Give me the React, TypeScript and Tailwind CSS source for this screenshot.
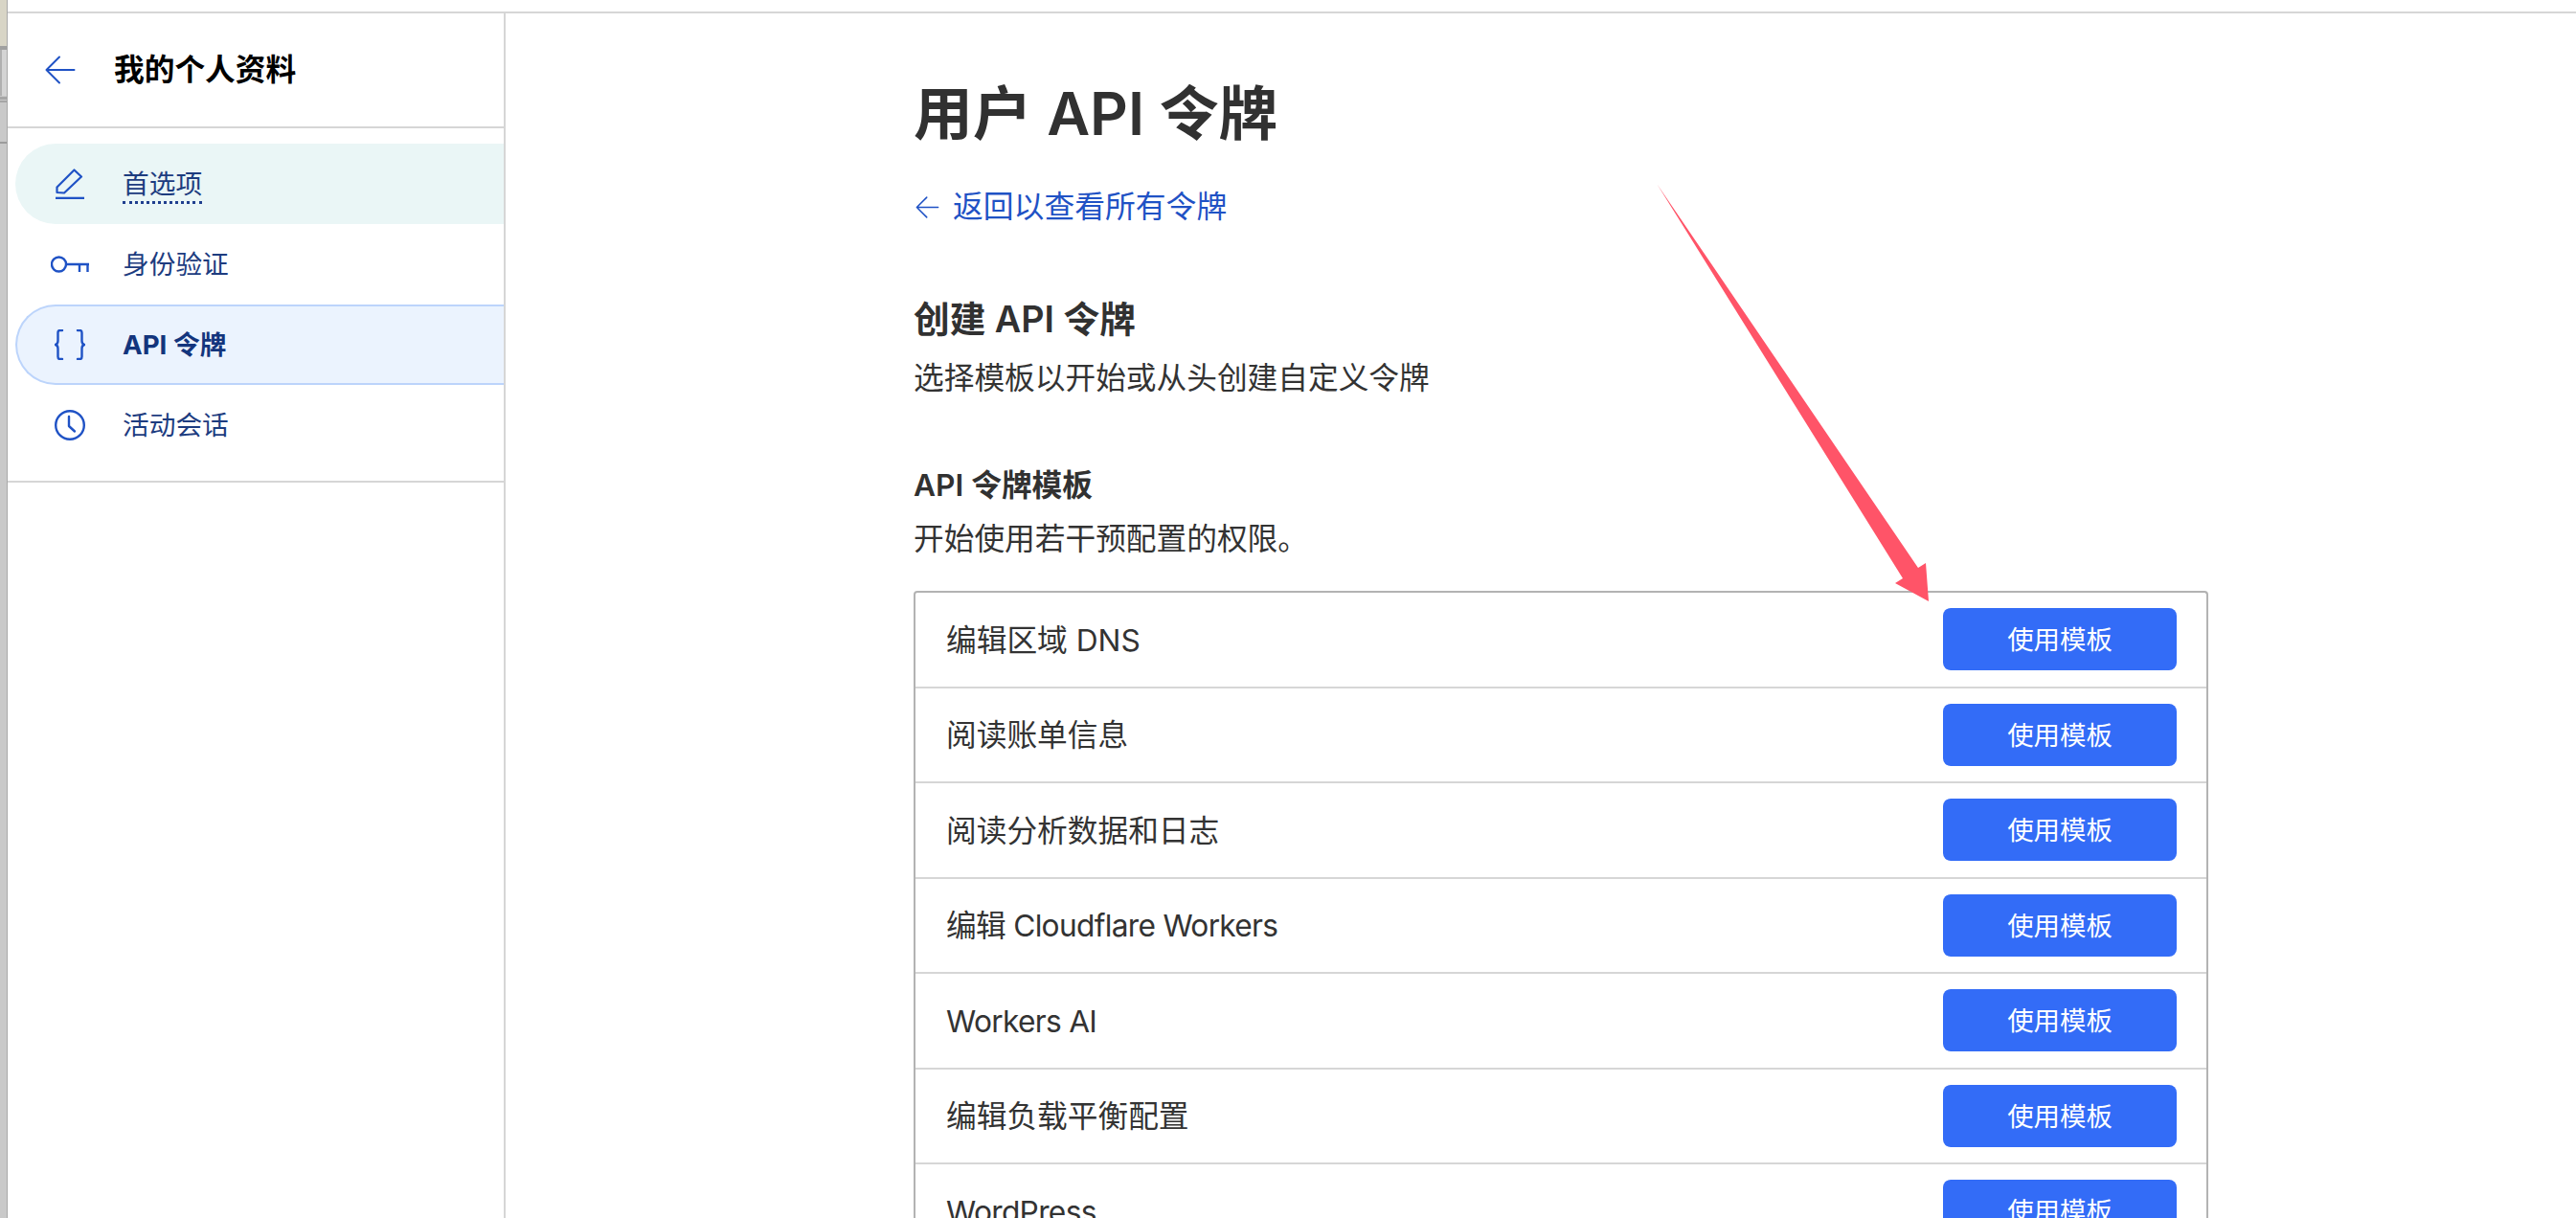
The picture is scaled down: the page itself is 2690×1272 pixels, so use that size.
const FONT = 'font-["Inter","Noto_Sans_CJK_SC",sans-serif]'

const TEMPLATES = [
  { label: '编辑区域 DNS', tight: false },
  { label: '阅读账单信息', tight: false },
  { label: '阅读分析数据和日志', tight: false },
  { label: '编辑 Cloudflare Workers', tight: true },
  { label: 'Workers AI', tight: true },
  { label: '编辑负载平衡配置', tight: false },
  { label: 'WordPress', tight: true },
]

function BackArrow({ className }: { className?: string }) {
  return (
    <svg aria-hidden="true" className={className} viewBox="0 0 32 30" fill="none" stroke="currentColor" strokeWidth="2" strokeLinecap="round" strokeLinejoin="round">
      <path d="M1.5 15h29M15 1.5 1.5 15 15 28.5" />
    </svg>
  )
}

function PencilIcon() {
  return (
    <svg aria-hidden="true" width="30" height="32" viewBox="0 0 30 32" fill="none" stroke="currentColor" strokeWidth="2.2" strokeLinejoin="round">
      <path d="M1.5 25V19.5L19.5 1.5 27 8.5 9 25.5Z" />
      <path d="M0 31h30" strokeWidth="2.6" />
    </svg>
  )
}

function KeyIcon() {
  return (
    <svg aria-hidden="true" width="40" height="18" viewBox="0 0 40 18" fill="none" stroke="currentColor" strokeWidth="2.400">
      <circle cx="8.5" cy="9" r="7.5" />
      <path d="M16 9h24M30 9v8M38.500 9v8" />
    </svg>
  )
}

function BracesIcon() {
  return (
    <svg aria-hidden="true" width="32" height="32" viewBox="0 0 32 32" fill="none" stroke="currentColor" strokeWidth="2.400" strokeLinecap="round" strokeLinejoin="round">
      <path d="M8 1H5.500C4 1 3.500 2 3.500 3.500V12C3.500 14 2.500 15.500 1 16 2.500 16.500 3.500 18 3.500 20V28.500C3.500 30 4 31 5.500 31H8" />
      <path d="M24 1h2.500C28 1 28.500 2 28.500 3.500V12C28.500 14 29.500 15.500 31 16 29.500 16.500 28.500 18 28.500 20V28.500C28.500 30 28 31 26.500 31H24" />
    </svg>
  )
}

function ClockIcon() {
  return (
    <svg aria-hidden="true" width="32" height="32" viewBox="0 0 32 32" fill="none" stroke="currentColor" strokeWidth="2.400" strokeLinecap="round" strokeLinejoin="round">
      <circle cx="16" cy="16" r="14.800" />
      <path d="M15 7v10l6 5.500" />
    </svg>
  )
}

function NavRow({ icon, label, state }: { icon: React.ReactNode; label: string; state?: 'hover' | 'active' }) {
  const box =
    state === 'active'
      ? 'bg-[#ebf3fe] border-2 border-r-0 border-[#bcd4fb] rounded-l-[42px] font-bold text-[#13357d]'
      : state === 'hover'
        ? 'bg-[#eaf6f6] rounded-l-[42px] text-[#1d3c7f]'
        : 'text-[#1d3c7f]'
  return (
    <div className={`ml-[8px] h-[84px] flex items-center text-[27.700px] leading-[36px] ${box}`}>
      <div className={`w-[64px] flex justify-center text-[#1f52c5] ${state === 'active' ? 'ml-[23px] mr-[23px]' : 'ml-[25px] mr-[23px]'}`}>{icon}</div>
      <span className={state === 'hover' ? 'pt-[4px] border-b-[3px] border-dotted border-[#1f3f8f] leading-[35px]' : ''}>{label}</span>
    </div>
  )
}

function TemplateRow({ label, tight, first }: { label: string; tight: boolean; first: boolean }) {
  return (
    <div className={`shrink-0 flex items-center justify-between pl-[32px] pr-[31px] ${first ? 'h-[97.500px]' : 'h-[99.500px] border-t-2 border-[#d6d6d6]'}`}>
      <span className={`pt-[2px] text-[31.700px] leading-[40px] text-[#333333] ${tight ? 'tracking-[-0.7px]' : ''}`}>{label}</span>
      <button className="w-[244px] h-[65px] pt-[1px] rounded-[8px] bg-[#336cf7] text-white text-[27.450px] leading-[36px]">使用模板</button>
    </div>
  )
}

export default function App() {
  return (
    <div className={`${FONT} w-[2690px] h-[1272px] flex overflow-hidden bg-white relative`}>
      {/* sliver of the window behind */}
      <div className="w-[8px] shrink-0 flex flex-col bg-[#c9c9c9] border-r border-[#a9a9a9]">
        <div className="h-[48px] bg-[#d8d5c6]" />
        <div className="h-[4px] bg-[#a0a0a0]" />
        <div className="h-[48px] bg-[#d4d4d4] border-l-2 border-[#b0b0b0]" />
        <div className="h-[3px] mt-[1px] bg-[#a6a6a6]" />
        <div className="h-[2px] mt-[1px] bg-[#a6a6a6]" />
        <div className="h-[2px] mt-[41px] bg-[#9c9c9c]" />
      </div>

      <div className="flex-1 flex flex-col">
        <div className="h-[14px] shrink-0 border-b-2 border-[#d6d6d6]" />

        <div className="flex-1 flex min-h-0">
          <aside className="w-[520px] shrink-0 border-r-2 border-[#d6d6d6]">
            <div className="h-[120px] flex items-center border-b-2 border-[#d6d6d6]">
              <BackArrow className="ml-[39px] w-[32px] h-[30px] text-[#1f52c5]" />
              <span className="ml-[40px] text-[31.700px] leading-[40px] font-semibold text-black">我的个人资料</span>
            </div>
            <div className="pt-[16px] pb-[16px] border-b-2 border-[#d6d6d6]">
              <NavRow icon={<PencilIcon />} label="首选项" state="hover" />
              <NavRow icon={<KeyIcon />} label="身份验证" />
              <NavRow icon={<BracesIcon />} label="API 令牌" state="active" />
              <NavRow icon={<ClockIcon />} label="活动会话" />
            </div>
          </aside>

          <main className="flex-1 min-w-0 pl-[426px] pt-[65px] flex flex-col">
            <h1 className="text-[61.800px] leading-[80px] font-semibold text-[#313131]">用户 API 令牌</h1>

            <a className="mt-[37px] ml-[2px] flex items-center text-[31.800px] leading-[40px] text-[#1f52c5]">
              <BackArrow className="w-[25px] h-[23px] mr-[14px]" />
              返回以查看所有令牌
            </a>

            <h2 className="mt-[73px] text-[37.700px] leading-[48px] font-semibold text-[#313131]">创建 API 令牌</h2>
            <p className="mt-[18px] text-[31.700px] leading-[40px] text-[#333333]">选择模板以开始或从头创建自定义令牌</p>

            <h3 className="mt-[72px] text-[31.700px] leading-[40px] font-semibold text-[#313131]">API 令牌模板</h3>
            <p className="mt-[16px] text-[31.700px] leading-[40px] text-[#333333]">开始使用若干预配置的权限。</p>

            <div className="mt-[34px] w-[1352px] flex flex-col border-2 border-b-0 border-[#b3b3b3] rounded-t-[4px]">
              {TEMPLATES.map((t, i) => (
                <TemplateRow key={t.label} label={t.label} tight={t.tight} first={i === 0} />
              ))}
            </div>
          </main>
        </div>
      </div>

      {/* annotation arrow pasted over the screenshot */}
      <svg aria-hidden="true" className="absolute left-0 top-0 pointer-events-none" width="2690" height="1272" viewBox="0 0 2690 1272">
        <polygon points="1730.500,192.500 2003,593 2011,588 2014,628 1979,609 1987,604" fill="#ff5468" />
      </svg>
    </div>
  )
}
